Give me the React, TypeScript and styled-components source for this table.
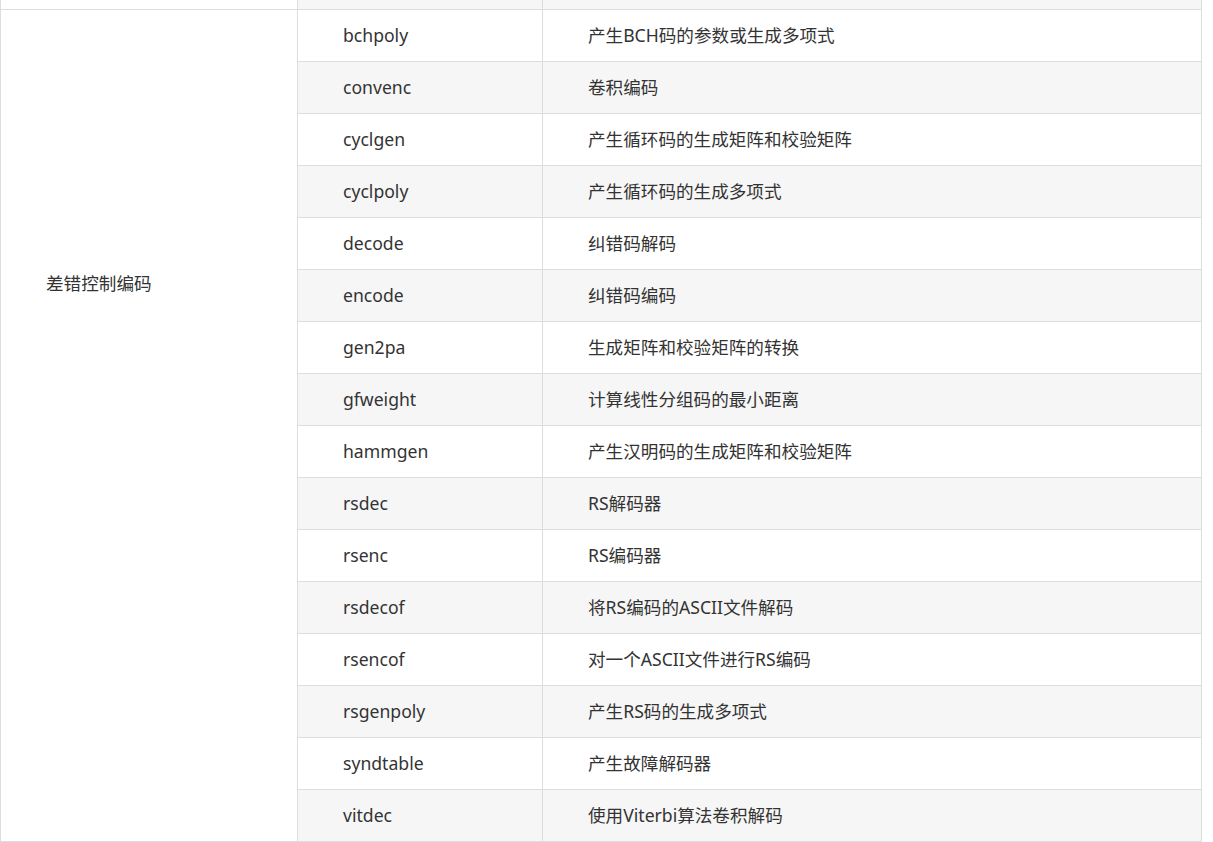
import React from "react";
import styled, { createGlobalStyle } from "styled-components";

const Global = createGlobalStyle`
  html, body { margin: 0; padding: 0; background: #fff; }
  body { font-family: "Noto Sans", "Noto Sans CJK SC", sans-serif; color: #333; }
`;

const Table = styled.table`
  border-collapse: collapse;
  width: 1201px;
  table-layout: fixed;
  font-size: 17.6px;
  border-right: 1px solid #ddd;
  border-left: 1px solid #ddd;
`;

const Row = styled.tr<{ $shade: boolean }>`
  background: ${(p) => (p.$shade ? "#f6f6f6" : "#fff")};
`;

const Cell = styled.td`
  border: 1px solid #ddd;
  height: 52px;
  padding: 0 0 2px 45px;
  box-sizing: border-box;
  vertical-align: middle;
  line-height: 24px;
  white-space: nowrap;
`;

const GroupCell = styled(Cell)`
  background: #fff;
  vertical-align: top;
  padding-top: 261px;
`;

const StubRow = styled.tr`
  background: #f6f6f6;
`;

const StubCell = styled.td<{ $white?: boolean }>`
  height: 9px;
  padding: 0;
  border: 1px solid #ddd;
  border-top: none;
  background: ${(p) => (p.$white ? "#fff" : "#f6f6f6")};
`;

const rows: [string, string][] = [
  ["bchpoly", "产生BCH码的参数或生成多项式"],
  ["convenc", "卷积编码"],
  ["cyclgen", "产生循环码的生成矩阵和校验矩阵"],
  ["cyclpoly", "产生循环码的生成多项式"],
  ["decode", "纠错码解码"],
  ["encode", "纠错码编码"],
  ["gen2pa", "生成矩阵和校验矩阵的转换"],
  ["gfweight", "计算线性分组码的最小距离"],
  ["hammgen", "产生汉明码的生成矩阵和校验矩阵"],
  ["rsdec", "RS解码器"],
  ["rsenc", "RS编码器"],
  ["rsdecof", "将RS编码的ASCII文件解码"],
  ["rsencof", "对一个ASCII文件进行RS编码"],
  ["rsgenpoly", "产生RS码的生成多项式"],
  ["syndtable", "产生故障解码器"],
  ["vitdec", "使用Viterbi算法卷积解码"],
];

export default function App() {
  return (
    <>
      <Global />
      <Table>
        <colgroup>
          <col style={{ width: 297 }} />
          <col style={{ width: 245 }} />
          <col style={{ width: 659 }} />
        </colgroup>
        <tbody>
          <StubRow>
            <StubCell $white />
            <StubCell />
            <StubCell />
          </StubRow>
          {rows.map(([fn, desc], i) => (
            <Row key={fn} $shade={i % 2 === 1}>
              {i === 0 && <GroupCell rowSpan={rows.length}>差错控制编码</GroupCell>}
              <Cell>{fn}</Cell>
              <Cell>{desc}</Cell>
            </Row>
          ))}
        </tbody>
      </Table>
    </>
  );
}
